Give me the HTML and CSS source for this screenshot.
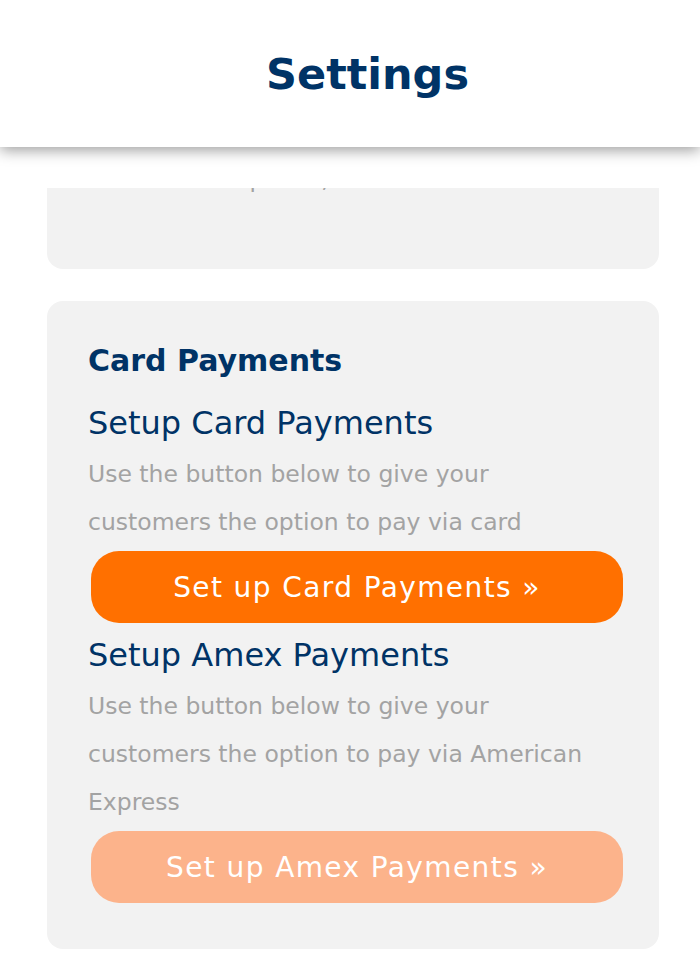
FILE: index.html
```html
<!DOCTYPE html>
<html lang="en">
<head>
<meta charset="utf-8">
<title>Settings</title>
<link rel="stylesheet" href="styles.css">
</head>
<body>
<div class="app">
  <header class="topbar">
    <h1 class="title">Settings</h1>
  </header>
  <main class="viewport">
    <div class="scroller">
      <section class="card card-partial">
        <p class="desc">Select all templates, then click save</p>
      </section>
      <section class="card">
        <h2 class="card-title">Card Payments</h2>
        <div class="option">
          <h3 class="option-title">Setup Card Payments</h3>
          <p class="desc">Use the button below to give your customers the option to pay via card</p>
          <button class="btn">Set up Card Payments »</button>
        </div>
        <div class="option">
          <h3 class="option-title">Setup Amex Payments</h3>
          <p class="desc">Use the button below to give your customers the option to pay via American Express</p>
          <button class="btn btn-disabled">Set up Amex Payments »</button>
        </div>
      </section>
    </div>
  </main>
</div>
</body>
</html>
```
FILE: styles.css
```css
* { box-sizing: border-box; }
html, body { margin: 0; padding: 0; background: #ffffff; }
body {
  font-family: "DejaVu Sans", "Liberation Sans", sans-serif;
  width: 700px;
  height: 978px;
  overflow: hidden;
}
.app {
  display: flex;
  flex-direction: column;
  height: 978px;
}
.topbar {
  position: relative;
  z-index: 2;
  height: 147px;
  flex: 0 0 147px;
  background: #ffffff;
  box-shadow: 0 3px 14px rgba(0, 0, 0, 0.4);
  display: flex;
  align-items: center;
  justify-content: center;
}
.title {
  margin: 0;
  padding-left: 35px;
  font-size: 43px;
  font-weight: 700;
  color: #003366;
}
.viewport {
  margin-top: 41px;
  flex: 1 1 auto;
  overflow: hidden;
  padding: 0 41px 0 47px;
}
.scroller {
  display: flex;
  flex-direction: column;
  gap: 32px;
  margin-top: -33px;
}
.card {
  background: #f2f2f2;
  border-radius: 16px;
  padding: 38px 36px 46px 41px;
  display: flex;
  flex-direction: column;
}
.card-partial {
  padding-top: 0;
  padding-bottom: 66px;
  border-radius: 0 0 16px 16px;
}
.card-title {
  margin: 0 0 15px;
  font-size: 30px;
  font-weight: 700;
  color: #003366;
  line-height: 44px;
}
.option {
  display: flex;
  flex-direction: column;
}
.option + .option {
  margin-top: 7px;
}
.option-title {
  margin: 0;
  font-size: 32px;
  font-weight: 400;
  color: #003366;
  line-height: 50px;
}
.desc {
  margin: 2px 0 0;
  max-width: 512px;
  font-size: 23.5px;
  line-height: 48px;
  color: #a3a3a3;
}
.card-partial .desc {
  margin: 0;
}
.btn {
  display: block;
  width: 532px;
  height: 72px;
  margin: 5px 0 0 3px;
  padding: 0;
  border: none;
  border-radius: 28px;
  background: #ff7000;
  color: #ffffff;
  font-family: inherit;
  font-size: 28px;
  letter-spacing: 1.4px;
  cursor: pointer;
}
.btn-disabled {
  background: #fcb38b;
}
```
